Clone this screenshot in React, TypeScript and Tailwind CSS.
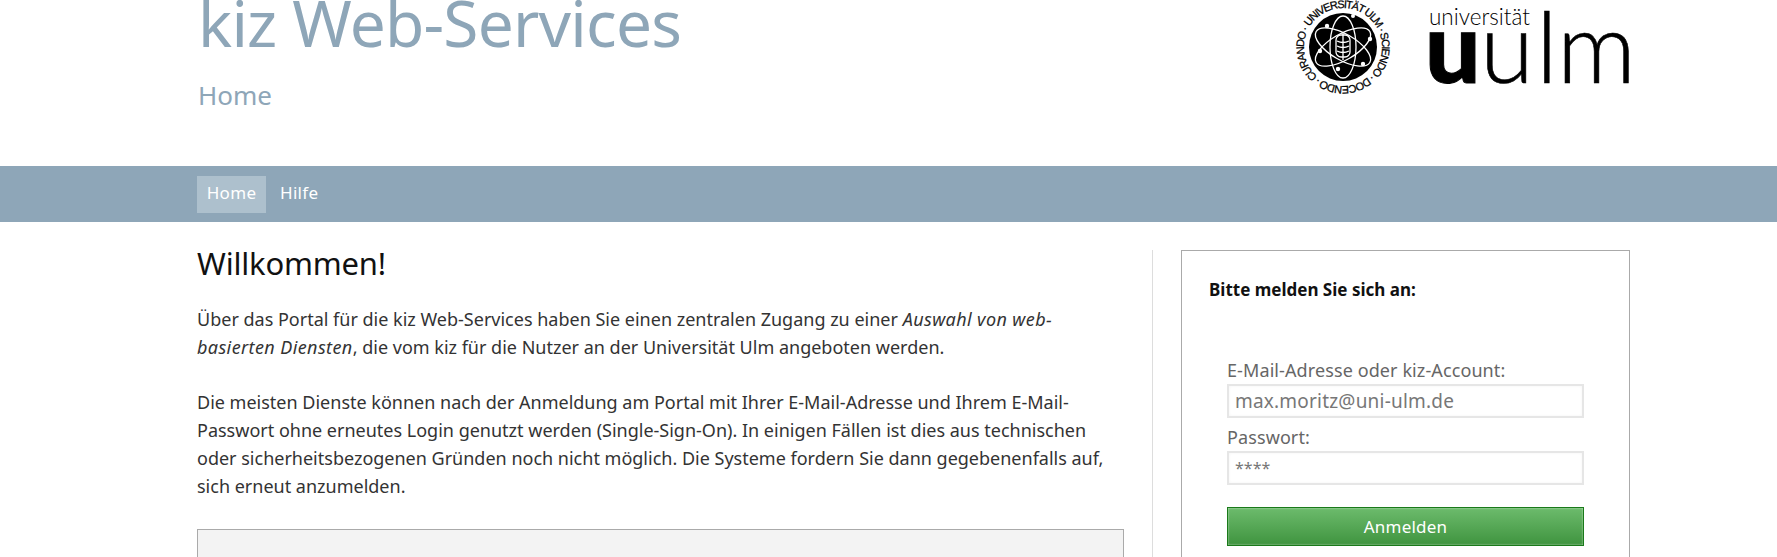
const seal = "UNIVERSITÄT ULM · SCIENDO · DOCENDO · CURANDO · ";

function Seal() {
  return (
    <svg width="104" height="100" viewBox="0 0 104 100" className="shrink-0 -mt-[3px]">
      <defs>
        <path id="ring" d="M13 50 a39 39 0 1 1 78 0 a39 39 0 1 1 -78 0" />
      </defs>
      <g transform="rotate(31 52 50)">
        <text fontFamily="'Liberation Sans', sans-serif" fontSize="11" fill="#000" stroke="#000" strokeWidth="0.25">
          <textPath href="#ring" textLength="243">
            {seal}
          </textPath>
        </text>
      </g>
      <circle cx="52" cy="50" r="34" fill="#000" />
      <g fill="none" stroke="#fff" strokeWidth="1.3">
        <ellipse cx="52" cy="50" rx="13" ry="31" />
        <ellipse cx="52" cy="50" rx="13" ry="31" transform="rotate(60 52 50)" />
        <ellipse cx="52" cy="50" rx="13" ry="31" transform="rotate(-60 52 50)" />
        <rect x="45" y="38" width="14" height="22" rx="5" />
        <path d="M52 36v27M46 44c4 2 8 2 12 0M46 49c4 2 8 2 12 0M46 54c4 2 8 2 12 0" />
      </g>
      <g fill="#fff">
        <circle cx="36" cy="29" r="2.2" />
        <circle cx="79" cy="42" r="2.2" />
        <circle cx="29" cy="54" r="2.2" />
        <circle cx="47" cy="72" r="2.2" />
        <circle cx="72" cy="67" r="2.2" />
        <circle cx="62" cy="19" r="2" />
      </g>
    </svg>
  );
}

function Wordmark() {
  return (
    <svg width="202" height="92" viewBox="0 0 202 92" className="shrink-0">
      <text x="1" y="25" fontFamily="Lato, sans-serif" fontWeight="300" fontSize="24" fill="#000" textLength="101" lengthAdjust="spacingAndGlyphs">
        universität
      </text>
      <text x="-3" y="83" fontFamily="Lato, sans-serif" fontWeight="900" fontSize="98" fill="#000" stroke="#000" strokeWidth="1">
        u
      </text>
      <text x="52 108 129" y="83" fontFamily="Lato, sans-serif" fontWeight="300" fontSize="98" fill="#000" stroke="#000" strokeWidth="0.6">
        ulm
      </text>
    </svg>
  );
}

function Field({ label, value, gap, small }: { label: string; value: string; gap?: boolean; small?: boolean }) {
  return (
    <div className={gap ? "mt-[7px]" : ""}>
      <div className="text-[18px] leading-[24px] tracking-[0.1px] text-[#666]">{label}</div>
      <div
        className={`mt-[2px] h-[34px] border-2 border-[#e6e6e6] pl-[6px] leading-[30px] text-[#777] shadow-[inset_0_0_3px_rgba(0,0,0,0.05)] ${
          small ? "text-[16px]" : "text-[19px] tracking-[0.2px]"
        }`}
      >
        {value}
      </div>
    </div>
  );
}

export default function App() {
  return (
    <div className="h-[557px] overflow-hidden bg-white font-['Noto_Sans',sans-serif]">
      <header className="h-[166px] pl-[197px] pr-[147px] flex justify-between overflow-hidden">
        <div className="text-[#8ea6b8]">
          <div className="-mt-[17px] text-[64px] leading-[80px] tracking-[-0.8px] pl-[1px]">kiz Web-Services</div>
          <div className="mt-[15px] text-[26px] leading-[34px] pl-[1px]">Home</div>
        </div>
        <div className="flex items-start gap-[33px]">
          <Seal />
          <Wordmark />
        </div>
      </header>

      <nav className="h-[56px] bg-[#8ea6b8] pl-[197px] pt-[10px] flex items-start text-white text-[17px] leading-[34px] tracking-[0.3px]">
        <a className="h-[37px] w-[69px] bg-[#adc0cd] text-center">Home</a>
        <a className="ml-[14px]">Hilfe</a>
      </nav>

      <main className="pl-[197px] pr-[147px] pt-[28px] flex">
        <section className="w-[927px] shrink-0 text-[18px] leading-[28px] text-[#333]">
          <h1 className="-mt-[1px] text-[31px] leading-[28px] tracking-[-0.2px] text-[#111]">Willkommen!</h1>
          <p className="mt-[28px]">
            Über das Portal für die kiz Web-Services haben Sie einen zentralen Zugang zu einer <em className="tracking-[0.4px]">Auswahl von web-<br />basierten Diensten</em>, die vom kiz für die Nutzer an der Universität Ulm angeboten werden.
          </p>
          <p className="mt-[27px]">
            Die meisten Dienste können nach der Anmeldung am Portal mit Ihrer E-Mail-Adresse und Ihrem E-Mail-Passwort ohne erneutes Login genutzt werden (Single-Sign-On). In einigen Fällen ist dies aus technischen oder sicherheitsbezogenen Gründen noch nicht möglich. Die Systeme fordern Sie dann gegebenenfalls auf, sich erneut anzumelden.
          </p>
          <div className="mt-[29px] h-[200px] border border-[#aaa] bg-[#f3f3f3]" />
        </section>

        <div className="ml-[28px] w-px h-[400px] bg-[#ddd] shrink-0" />

        <aside className="ml-[28px] flex-1 h-[400px] border border-[#aaa] px-[27px] pt-[27px]">
          <h2 className="text-[17px] leading-[24px] font-bold text-[#111]">Bitte melden Sie sich an:</h2>
          <form className="mt-[56px] px-[18px]">
            <Field label="E-Mail-Adresse oder kiz-Account:" value="max.moritz@uni-ulm.de" />
            <Field label="Passwort:" value="****" gap small />
            <button
              type="button"
              className="mt-[22px] block w-full h-[39px] border border-[#1a7a1a] bg-gradient-to-b from-[#6cbb6c] to-[#3f943f] text-white text-[17px] tracking-[0.2px] shadow-[inset_0_0_2px_rgba(255,255,255,0.7)]"
            >
              Anmelden
            </button>
          </form>
        </aside>
      </main>
    </div>
  );
}
